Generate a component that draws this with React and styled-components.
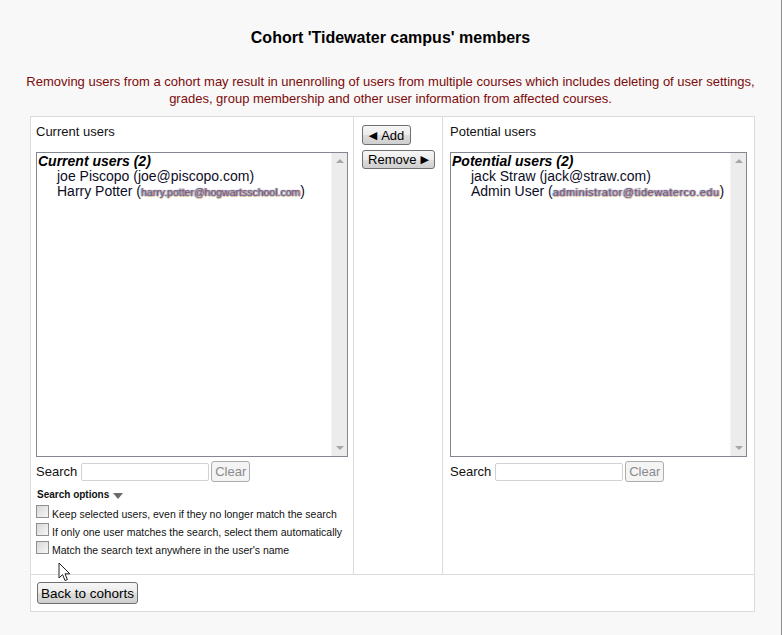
import React from "react";
import styled, { createGlobalStyle } from "styled-components";

const GlobalStyle = createGlobalStyle`
  html, body {
    margin: 0;
    padding: 0;
    background: #f8f8f8;
  }
  body {
    font-family: "Liberation Sans", Arial, sans-serif;
    color: #111;
  }
`;

const Page = styled.div`
  position: relative;
  width: 781px;
  height: 635px;
  border-right: 1px solid #8d8d8d;
  background: #f8f8f8;
  overflow: hidden;
`;

const Title = styled.h2`
  margin: 0;
  padding-top: 28px;
  font-size: 16px;
  line-height: 19px;
  font-weight: bold;
  text-align: center;
  color: #000;
`;

const Notice = styled.p`
  margin: 26px 0 0;
  font-size: 13px;
  line-height: 17px;
  text-align: center;
  color: #7d0a0a;
`;

const Panel = styled.div`
  margin: 9px 0 0 30px;
  width: 725px;
  box-sizing: border-box;
  border: 1px solid #dcdcdc;
  background: #fff;
`;

const MainRow = styled.div`
  display: grid;
  grid-template-columns: 323px 89px 1fr;
  height: 457px;
`;

const Cell = styled.div`
  box-sizing: border-box;
  padding: ${(p) => p.$pad};
  border-right: ${(p) => (p.$last ? "none" : "1px solid #dcdcdc")};
  display: flex;
  flex-direction: column;
  align-items: flex-start;
`;

const Label = styled.div`
  font-size: 13px;
  line-height: 15px;
  margin-bottom: 13px;
`;

const ListBox = styled.div`
  box-sizing: border-box;
  width: ${(p) => p.$width}px;
  height: 305px;
  border: 1px solid #828790;
  display: flex;
  background: #fff;
`;

const ListContent = styled.div`
  flex: 1;
  padding: 1px 1px 0;
  font-size: 14px;
  line-height: 15px;
  white-space: nowrap;
  overflow: hidden;
`;

const GroupHead = styled.div`
  font-weight: bold;
  font-style: italic;
  color: #000;
`;

const Option = styled.div`
  padding-left: 19px;
  color: #0d0d1f;
`;

const Blurred = styled.span`
  font-size: ${(p) => p.$size || 11}px;
  letter-spacing: ${(p) => p.$ls || 0}px;
  color: #6f5f8f;
  text-shadow: 1px 0 1px #c06a6a, -1px 0 1px #5aa0d0, 0 1px 1px #d0b060;
  filter: blur(0.5px);
`;

const Scrollbar = styled.div`
  width: 16px;
  background: #ececec;
  border-left: 1px solid #f4f4f4;
  display: flex;
  flex-direction: column;
  justify-content: space-between;
  align-items: center;
  padding: 6px 0;
  box-sizing: border-box;
`;

const Arrow = styled.span`
  width: 0;
  height: 0;
  border-left: 4px solid transparent;
  border-right: 4px solid transparent;
  ${(p) =>
    p.$down ? "border-top: 4px solid #a6a6a6;" : "border-bottom: 4px solid #a6a6a6;"}
`;

const SearchRow = styled.div`
  display: flex;
  align-items: center;
  height: 21px;
  margin-top: 4px;
  font-size: 13px;
`;

const SearchInput = styled.input`
  box-sizing: border-box;
  width: 128px;
  height: 18px;
  margin: 0 2px 0 4px;
  border: 1px solid #d2d2d2;
  border-radius: 2px;
  background: #fff;
  padding: 0 2px;
`;

const Button = styled.button`
  box-sizing: border-box;
  height: ${(p) => p.$h || 20}px;
  width: ${(p) => p.$w}px;
  padding: 0;
  font-family: "Liberation Sans", Arial, sans-serif;
  font-size: ${(p) => p.$size || 13}px;
  color: ${(p) => (p.disabled ? "#8a8a8a" : "#000")};
  border: 1px solid ${(p) => (p.disabled ? "#adadad" : "#707070")};
  border-radius: 3px;
  background: ${(p) =>
    p.disabled
      ? "#f4f4f4"
      : "linear-gradient(#f6f6f6 0%, #ebebeb 50%, #dddddd 51%, #cfcfcf 100%)"};
  display: flex;
  align-items: center;
  justify-content: center;
  gap: 4px;
  white-space: nowrap;
`;

const Tri = styled.span`
  font-family: "DejaVu Sans", sans-serif;
  font-size: 11px;
`;

const OptionsHead = styled.div`
  display: flex;
  align-items: center;
  gap: 4px;
  margin: 7px 0 2px 1px;
  font-size: 10px;
  font-weight: bold;
  line-height: 12px;
`;

const DownTri = styled.span`
  width: 0;
  height: 0;
  margin-top: 2px;
  border-left: 5px solid transparent;
  border-right: 5px solid transparent;
  border-top: 6px solid #6a6a6a;
`;

const CheckRow = styled.label`
  display: flex;
  align-items: center;
  height: 18px;
  font-size: 10.5px;
  color: #111;
`;

const Check = styled.input.attrs({ type: "checkbox" })`
  appearance: none;
  box-sizing: border-box;
  width: 13px;
  height: 13px;
  margin: 0 3px 2px 0;
  border: 1px solid #8e8f8f;
  background: linear-gradient(135deg, #d8d8d8, #f7f7f7);
`;

const CheckText = styled.span`
  margin-top: 3px;
`;

const BottomRow = styled.div`
  border-top: 1px solid #dcdcdc;
  height: 37px;
  box-sizing: border-box;
  padding: 7px 6px 0;
`;

const Cursor = styled.svg`
  position: absolute;
  left: 58px;
  top: 562px;
`;

const App = () => {
  return (
    <Page>
      <GlobalStyle />
      <Title>Cohort 'Tidewater campus' members</Title>
      <Notice>
        Removing users from a cohort may result in unenrolling of users from multiple courses which
        includes deleting of user settings,
        <br />
        grades, group membership and other user information from affected courses.
      </Notice>
      <Panel>
        <MainRow>
          <Cell $pad="7px 5px 0 5px">
            <Label>Current users</Label>
            <ListBox $width={312}>
              <ListContent>
                <GroupHead>Current users (2)</GroupHead>
                <Option>joe Piscopo (joe@piscopo.com)</Option>
                <Option>
                  Harry Potter (<Blurred $size={10.5}>harry.potter@hogwartsschool.com</Blurred>)
                </Option>
              </ListContent>
              <Scrollbar>
                <Arrow />
                <Arrow $down />
              </Scrollbar>
            </ListBox>
            <SearchRow>
              Search
              <SearchInput />
              <Button $w={39} $h={21} disabled>
                Clear
              </Button>
            </SearchRow>
            <OptionsHead>
              Search options
              <DownTri />
            </OptionsHead>
            <CheckRow>
              <Check />
              <CheckText>Keep selected users, even if they no longer match the search</CheckText>
            </CheckRow>
            <CheckRow>
              <Check />
              <CheckText>If only one user matches the search, select them automatically</CheckText>
            </CheckRow>
            <CheckRow>
              <Check />
              <CheckText>Match the search text anywhere in the user's name</CheckText>
            </CheckRow>
          </Cell>
          <Cell $pad="8px 0 0 8px">
            <Button $w={49} $h={20}>
              <Tri>◀</Tri>Add
            </Button>
            <div style={{ height: 5 }} />
            <Button $w={73} $h={19}>
              Remove<Tri>▶</Tri>
            </Button>
          </Cell>
          <Cell $pad="7px 6px 0 7px" $last>
            <Label>Potential users</Label>
            <ListBox $width={297}>
              <ListContent>
                <GroupHead>Potential users (2)</GroupHead>
                <Option>jack Straw (jack@straw.com)</Option>
                <Option>
                  Admin User (<Blurred $ls={0.5}>administrator@tidewaterco.edu</Blurred>)
                </Option>
              </ListContent>
              <Scrollbar>
                <Arrow />
                <Arrow $down />
              </Scrollbar>
            </ListBox>
            <SearchRow>
              Search
              <SearchInput />
              <Button $w={39} $h={21} disabled>
                Clear
              </Button>
            </SearchRow>
          </Cell>
        </MainRow>
        <BottomRow>
          <Button $w={101} $h={22} $size={13.5}>
            Back to cohorts
          </Button>
        </BottomRow>
      </Panel>
      <Cursor width="13" height="20" viewBox="0 0 13 20">
        <path
          d="M1 1 L1 16 L4.6 12.6 L7 18.6 L9.4 17.6 L7 11.8 L11.8 11.8 Z"
          fill="#fff"
          stroke="#222"
          strokeWidth="1"
          strokeLinejoin="round"
        />
      </Cursor>
    </Page>
  );
};

export default App;
